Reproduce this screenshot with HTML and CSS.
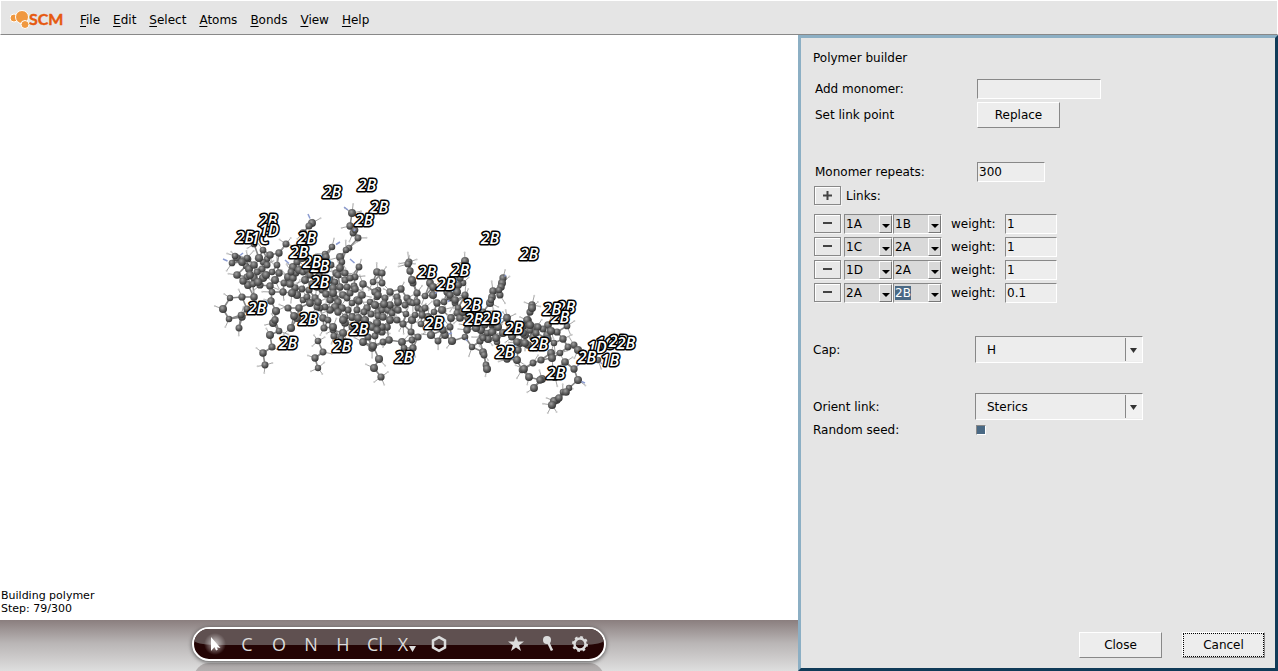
FILE: index.html
```html
<!DOCTYPE html>
<html lang="en">
<head>
    <meta charset="UTF-8">
    <meta name="viewport" content="width=device-width, initial-scale=1.0">
    <title>Polymer builder</title>
    <link rel="stylesheet" href="styles.css">
</head>
<body>
    <header class="menubar">
        <svg class="logo" width="56" height="22" viewBox="0 0 56 22" role="img" aria-label="SCM">
            <g fill="#f0983f" stroke="#fff" stroke-width="1">
                <circle cx="4" cy="9" r="4"/>
                <circle cx="12" cy="8" r="6.5"/>
                <circle cx="15" cy="15.500" r="4"/>
            </g>
            <text class="logo-text" x="19" y="16">SCM</text>
        </svg>
        <nav class="menu">
            <a href="#"><u>F</u>ile</a>
            <a href="#"><u>E</u>dit</a>
            <a href="#"><u>S</u>elect</a>
            <a href="#"><u>A</u>toms</a>
            <a href="#"><u>B</u>onds</a>
            <a href="#"><u>V</u>iew</a>
            <a href="#"><u>H</u>elp</a>
        </nav>
    </header>

    <main class="workspace">
        <section class="editor">
            <div class="viewport">
                <svg id="molecule" class="molecule" viewBox="0 35 798 585">
                    <defs>
                        <radialGradient id="carbon" cx="0.4" cy="0.35" r="0.65">
                            <stop offset="0" stop-color="#a2a2a2"/>
                            <stop offset="0.45" stop-color="#6b6b6b"/>
                            <stop offset="1" stop-color="#343434"/>
                        </radialGradient>
                    </defs>
                </svg>
                <p class="status">Building polymer<br>Step: 79/300</p>
            </div>
            <div class="dock">
                <div class="toolbar">
                    <div class="tools">
                        <button class="active" aria-label="Select">
                            <svg width="20" height="20" viewBox="0 0 20 20"><path d="M6 3v14l3.500-4 6 1z" fill="#fff"/><path d="M10 12l2 4" stroke="#fff" stroke-width="2"/></svg>
                        </button>
                        <button>C</button>
                        <button>O</button>
                        <button>N</button>
                        <button>H</button>
                        <button>Cl</button>
                        <button class="more">X<svg width="7" height="6" viewBox="0 0 7 6"><path d="M0 0h7L3.500 6z" fill="#dcdcdc"/></svg></button>
                        <button aria-label="Ring">
                            <svg width="18" height="18" viewBox="0 0 18 18"><path d="M9 2.200l6 3.400v6.800l-6 3.400-6-3.400V5.600z" fill="none" stroke="#dcdcdc" stroke-width="2.500"/></svg>
                        </button>
                    </div>
                    <div class="tools">
                        <button aria-label="Favorites">
                            <svg width="18" height="18" viewBox="0 0 18 18"><path d="M9 1l2 5.600h6l-4.800 3.600L14 16l-5-3.500L4 16l1.800-5.800L1 6.600h6z" fill="#dcdcdc"/></svg>
                        </button>
                        <button aria-label="Preoptimize">
                            <svg width="18" height="18" viewBox="0 0 18 18"><circle cx="8" cy="5" r="4" fill="#dcdcdc"/><path d="M9 7l4 8.500" stroke="#dcdcdc" stroke-width="2.500"/></svg>
                        </button>
                        <button aria-label="Settings">
                            <svg width="18" height="18" viewBox="0 0 18 18"><circle cx="9" cy="9" r="7" fill="none" stroke="#dcdcdc" stroke-width="2" stroke-dasharray="2.750 2.750"/><circle cx="9" cy="9" r="5.500" fill="none" stroke="#dcdcdc" stroke-width="2.400"/></svg>
                        </button>
                    </div>
                </div>
                <div class="reflection"></div>
            </div>
        </section>

        <form class="panel">
            <h1>Polymer builder</h1>

            <div class="monomer">
                <div class="row">
                    <label for="add">Add monomer:</label>
                    <input type="text" id="add" class="entry entry-wide">
                </div>
                <div class="row">
                    <label for="replace">Set link point</label>
                    <button type="button" id="replace" class="btn">Replace</button>
                </div>
            </div>

            <div class="repeats">
                <div class="row">
                    <label for="repeats">Monomer repeats:</label>
                    <input type="text" id="repeats" class="entry entry-medium" value="300">
                </div>
                <div class="row">
                    <button type="button" class="small" aria-label="Add link"><svg width="9" height="9" viewBox="0 0 9 9"><path d="M0 4.500h9M4.500 0v9" stroke="#444" stroke-width="2"/></svg></button>
                    <span class="links-title">Links:</span>
                </div>
            </div>

            <div class="links">
                <div class="link">
                    <button type="button" class="small" aria-label="Remove link"><svg width="9" height="9" viewBox="0 0 9 9"><path d="M0 4h9" stroke="#444" stroke-width="2"/></svg></button>
                    <span class="combo"><input type="text" value="1A" aria-label="From"><button type="button" aria-label="Choose"></button></span>
                    <span class="combo"><input type="text" value="1B" aria-label="To"><button type="button" aria-label="Choose"></button></span>
                    <label for="w1">weight:</label>
                    <input type="text" id="w1" class="entry entry-small" value="1">
                </div>
                <div class="link">
                    <button type="button" class="small" aria-label="Remove link"><svg width="9" height="9" viewBox="0 0 9 9"><path d="M0 4h9" stroke="#444" stroke-width="2"/></svg></button>
                    <span class="combo"><input type="text" value="1C" aria-label="From"><button type="button" aria-label="Choose"></button></span>
                    <span class="combo"><input type="text" value="2A" aria-label="To"><button type="button" aria-label="Choose"></button></span>
                    <label for="w2">weight:</label>
                    <input type="text" id="w2" class="entry entry-small" value="1">
                </div>
                <div class="link">
                    <button type="button" class="small" aria-label="Remove link"><svg width="9" height="9" viewBox="0 0 9 9"><path d="M0 4h9" stroke="#444" stroke-width="2"/></svg></button>
                    <span class="combo"><input type="text" value="1D" aria-label="From"><button type="button" aria-label="Choose"></button></span>
                    <span class="combo"><input type="text" value="2A" aria-label="To"><button type="button" aria-label="Choose"></button></span>
                    <label for="w3">weight:</label>
                    <input type="text" id="w3" class="entry entry-small" value="1">
                </div>
                <div class="link">
                    <button type="button" class="small" aria-label="Remove link"><svg width="9" height="9" viewBox="0 0 9 9"><path d="M0 4h9" stroke="#444" stroke-width="2"/></svg></button>
                    <span class="combo"><input type="text" value="2A" aria-label="From"><button type="button" aria-label="Choose"></button></span>
                    <span class="combo"><input type="text" id="lastLink" value="2B" aria-label="To"><button type="button" aria-label="Choose"></button></span>
                    <label for="w4">weight:</label>
                    <input type="text" id="w4" class="entry entry-small" value="0.1">
                </div>
            </div>

            <div class="options">
                <div class="row">
                    <label for="cap">Cap:</label>
                    <select id="cap"><option>H</option></select>
                </div>
                <div class="row">
                    <label for="orient">Orient link:</label>
                    <select id="orient"><option>Sterics</option></select>
                </div>
            </div>
            <div class="row seed">
                <label for="seed">Random seed:</label>
                <input type="checkbox" id="seed" checked>
            </div>

            <div class="actions">
                <button type="button" class="btn">Close</button>
                <button type="button" class="btn default">Cancel</button>
            </div>
        </form>
    </main>

    <script src="script.js"></script>
</body>
</html>
```
FILE: styles.css
```css
* {
    box-sizing: border-box;
}

body {
    margin: 0;
    height: 100vh;
    display: flex;
    flex-direction: column;
    font-family: "DejaVu Sans", sans-serif;
    font-size: 12px;
    color: #000;
    background: #fff;
}

button, input, select {
    font-family: inherit;
    font-size: 12px;
    color: #000;
    margin: 0;
    border-radius: 0;
}

/* Menu bar */
.menubar {
    display: flex;
    align-items: center;
    gap: 14px;
    height: 35px;
    padding: 5px 9px 0;
    background: #e5e5e5;
    border: 1px solid #fff;
    border-bottom-color: #888;
}

.logo-text {
    font-family: Lato, sans-serif;
    font-size: 16px;
    font-weight: bold;
    fill: #e6590f;
    stroke: #e6590f;
    stroke-width: 0.4;
}

.menu {
    display: flex;
    gap: 13px;
}

.menu a {
    color: #000;
    text-decoration: none;
}

.menu u {
    text-underline-offset: 2px;
}

/* Work area */
.workspace {
    flex: 1;
    display: flex;
    min-height: 0;
}

.editor {
    flex: 1;
    min-width: 0;
    display: flex;
    flex-direction: column;
}

.viewport {
    flex: 1;
    min-height: 0;
    position: relative;
}

.molecule {
    display: block;
    width: 100%;
    height: 100%;
}

.tag {
    font-family: "Open Sans", sans-serif;
    font-size: 16px;
    font-weight: 600;
    font-style: italic;
    text-anchor: middle;
    fill: #fff;
    stroke: #000;
    stroke-width: 3;
    stroke-linejoin: round;
    paint-order: stroke;
}

.status {
    position: absolute;
    left: 1px;
    bottom: 5px;
    margin: 0;
    font-size: 11px;
    line-height: 13px;
}

/* Tool bar */
.dock {
    height: 51px;
    padding-top: 7px;
    overflow: hidden;
    background: linear-gradient(#8a7e7e, #b9b5b5 45%, #dedede);
}

.toolbar {
    position: relative;
    display: flex;
    justify-content: space-between;
    align-items: center;
    width: 414px;
    height: 34px;
    margin: 0 auto;
    padding: 0 8px 0 5px;
    border: 2px solid #fff;
    border-radius: 17px;
    background: #240404;
    box-shadow: 0 1px 4px rgba(0, 0, 0, 0.6);
    overflow: hidden;
}

.toolbar::before {
    content: "";
    position: absolute;
    left: 0;
    right: 0;
    top: 0;
    height: 16px;
    border-radius: 0 0 20px 20px / 0 0 5px 5px;
    background: #5f5050;
}

.tools {
    display: flex;
    position: relative;
}

.tools button {
    display: flex;
    justify-content: center;
    align-items: center;
    width: 32px;
    height: 30px;
    padding: 0;
    border: none;
    background: none;
    color: #dcdcdc;
    font-family: "Open Sans", sans-serif;
    font-size: 18px;
}

.tools .active {
    background: radial-gradient(circle, rgba(255, 255, 255, 0.7), rgba(255, 255, 255, 0) 50%);
}

.more svg {
    margin: 10px 0 0 1px;
}

.reflection {
    width: 410px;
    height: 30px;
    margin: 2px auto 0;
    border-radius: 17px;
    background: linear-gradient(#aaa5a5, #d0cece);
}

/* Polymer builder */
.panel {
    flex: 0 0 480px;
    display: flex;
    flex-direction: column;
    padding: 10px 10px 10px 12px;
    background: #e5e5e5;
    border: 3px solid;
    border-color: #8cafc4 #103b58 #103b58 #8cafc4;
}

.panel h1 {
    margin: 0;
    font-size: 12px;
    font-weight: normal;
    line-height: 20px;
}

.row {
    display: flex;
    align-items: center;
}

.row label {
    width: 162px;
}

.monomer, .repeats {
    display: flex;
    flex-direction: column;
    gap: 4px;
    padding-left: 2px;
}

.monomer {
    gap: 3px;
    margin-top: 11px;
}

.repeats {
    margin-top: 34px;
}

.btn {
    width: 83px;
    height: 26px;
    padding: 0;
    background: #ededed;
    border: 1px solid;
    border-color: #fff #888 #888 #fff;
}

.btn.default {
    outline: 1px dotted #000;
    outline-offset: -2px;
}

.entry {
    height: 20px;
    padding: 0 1px;
    background: #ededed;
    border: 1px solid;
    border-color: #888 #fff #fff #888;
    outline: none;
}

.entry-wide {
    width: 124px;
}

.entry-medium {
    width: 68px;
}

.entry-small {
    width: 52px;
}

.small {
    display: flex;
    justify-content: center;
    align-items: center;
    width: 27px;
    height: 19px;
    padding: 0;
    background: #e8e8e8;
    border: 1px solid #888;
    box-shadow: inset 1px 1px #fff, 1px 1px #f4f4f4;
}

.repeats .small {
    margin-left: -1px;
}

.links-title {
    margin-left: 5px;
}

.links {
    display: flex;
    flex-direction: column;
    gap: 3px;
    margin: 9px 0 0 1px;
}

.link {
    display: flex;
    height: 20px;
}

.link label {
    width: 54px;
    margin-left: 9px;
    line-height: 20px;
}

.combo {
    display: flex;
    width: 49px;
    height: 20px;
    background: #d9d9d9;
    border: 1px solid;
    border-color: #888 #fff #fff #888;
}

.small + .combo {
    margin-left: 3px;
}

.combo input {
    flex: 1;
    width: 20px;
    padding: 0 1px;
    border: none;
    outline: none;
    background: none;
}

.combo input::selection {
    background: #4a6984;
    color: #fff;
}

.combo button {
    width: 13px;
    padding: 4px 0 0;
    background: #d9d9d9;
    border: 1px solid;
    border-color: #fff #777 #777 #fff;
}

.combo button::after {
    content: "";
    display: block;
    width: 0;
    margin: 0 auto;
    border: 4px solid transparent;
    border-top-color: #000;
    border-bottom: none;
}

.options {
    display: flex;
    flex-direction: column;
    gap: 30px;
    margin-top: 33px;
}

select {
    appearance: none;
    width: 168px;
    height: 27px;
    padding: 0 20px 0 11px;
    border: 1px solid;
    border-color: #888 #fff #fff #888;
    background: #ededed url("data:image/svg+xml,%3Csvg xmlns='http://www.w3.org/2000/svg' width='17' height='23'%3E%3Cpath d='M0 0h17v23H0z' fill='%23f1f1f1'/%3E%3Cpath d='M0 0h1v23H0z' fill='%23888'/%3E%3Cpath d='M5 10h7l-3.500 5z' fill='%23333'/%3E%3C/svg%3E") no-repeat right center;
}

.seed {
    height: 19px;
}

.seed input {
    appearance: none;
    width: 10px;
    height: 10px;
    margin-left: 1px;
    background: #4a6984;
    border: 1px solid;
    border-color: #888 #fff #fff #888;
}

.actions {
    display: flex;
    justify-content: flex-end;
    gap: 20px;
    margin-top: auto;
}
```
FILE: script.js
```js
const NS = 'http://www.w3.org/2000/svg';
const scene = document.getElementById('molecule');

// carbon positions, one fragment of the polymer per line
const fragments = [
    '230,298 223,309 229,319 242,317 247,309 242,297 254,297 241,315 239,328',
    '271,301 276,311 273,323 279,331 291,328 297,318 288,308 270,335 272,347 263,353 265,365 294,316 275,320',
    '323,318 324,328 318,341 323,352 315,358 318,368 333,330 334,336 343,333 345,323 341,339',
    '372,327 375,336 372,348 379,359 374,368 381,377 363,342 369,325 373,346 382,332 383,342 389,340',
    '402,342 412,340 413,348 404,348 403,324 411,332 421,324',
    '312,223 303,233 309,226 352,213 350,226 353,233 358,238 355,230 349,248 346,250 340,257 342,262 332,247 325,254 326,257',
    '359,267 355,277 354,286 286,244 279,253 263,250 267,259 254,244 237,258 232,263 237,275 248,259 235,256',
    '377,272 382,273 373,282 382,283 378,290 409,262 410,271 413,283 408,264 412,280',
    '465,261 463,283 460,278 458,285 430,283 433,287 433,295 425,296 417,293 447,292 450,298 457,292 465,296 455,303',
    '503,278 502,283 500,295 493,291 492,297 490,303 483,312 501,287 499,290 491,300 532,305 530,312 528,320 532,308',
    '418,337 431,335 438,341 445,335 452,341 465,337 472,347 483,352 484,355 486,365 487,369',
    '482,337 480,341 488,339 492,332 497,342 507,359 517,360 522,370 529,377 534,388 533,363 541,360 524,369',
    '551,353 552,358 560,353 565,362 542,379 555,377 540,380 574,369 578,380 569,388 563,392 566,392 557,400 554,401 552,405 559,398',
    '568,347 574,345 578,350 582,353 598,360 563,339 567,326 557,332 548,325 537,327 528,321 547,335 554,343 533,337 525,335',
    '520,343 518,350 528,345 507,317 492,325 512,336 543,329 551,331 548,339 530,330 523,326',
    '247,258 246,266 249,269 254,265 262,269 263,262 270,255 277,265 279,273 272,272 263,278 254,278 247,277 248,285 253,284',
    '260,285 270,286 272,292 283,292 284,283 288,277 293,278 296,273 293,267 299,270 297,262 303,272 307,270 302,258 305,280',
    '295,288 302,289 297,295 303,300 292,293 307,297 299,308 315,298 322,290 317,287 325,287 330,280 335,282 336,273 340,268',
    '338,275 333,288 340,287 343,295 335,298 330,300 338,302 347,298 350,293 355,289 345,280 363,284 357,300 359,301 352,303',
    '348,310 345,317 342,308 335,307 338,312 330,310 352,317 357,310 367,308 370,302 358,318 365,320 343,320 325,307 320,308 317,307',
    '375,292 377,297 378,295 380,307 375,305 378,312 382,310 378,316 383,317 388,310 392,313 395,308 390,305 385,298 390,292',
    '401,289 397,297 398,302 407,298 410,302 417,293 413,303 418,308 422,310 425,308 428,317 422,315 417,302 405,305 397,320',
    '387,327 382,327 377,323 372,327 377,330 403,324 412,320 434,312 432,325 333,327 328,320 357,325 365,330 368,337',
    '450,295 455,300 458,308 457,313 460,318 463,312 468,325 467,330 465,295 450,327 443,330',
    '481,330 487,333 483,338 492,332 496,338 493,323 498,327 507,318 512,337 513,330 522,327 527,320 523,333 517,342 525,343 530,325 538,327',
    '242,262 250,275 257,272 259,258 267,265 258,282 243,281 266,275 275,280 290,284 291,272 310,264 310,275 312,284 319,276',
    '326,270 331,265 326,294 318,302 309,290 310,303 347,287 350,278 345,273 333,293 362,295 364,312 371,314 352,327 384,304',
    '398,310 406,314 390,320 415,315 437,303 444,302 442,310 451,318 476,328 473,312 480,320 468,318 485,325 503,333 536,333'
];

// amine nitrogens: x, y of the carbon and of the tip
const nitrogens = [
    [312, 223, 308, 214], [352, 213, 344, 207], [332, 247, 340, 242], [359, 267, 350, 259],
    [232, 263, 223, 259], [237, 258, 243, 253], [353, 233, 355, 229], [503, 278, 506, 275],
    [578, 380, 585, 383], [574, 369, 580, 363], [445, 335, 452, 333], [598, 360, 602, 364],
    [293, 267, 285, 260], [433, 295, 437, 292], [450, 298, 448, 302], [465, 337, 467, 341]
];

const labels = [
    ['2B', 332, 192], ['2B', 367, 185], ['2B', 379, 207], ['2B', 364, 220],
    ['2B', 268, 220], ['2B', 245, 237], ['1C', 260, 238], ['1D', 269, 230],
    ['2B', 307, 238], ['2B', 320, 266], ['2B', 312, 262], ['2B', 299, 252],
    ['2B', 320, 282], ['2B', 257, 308], ['2B', 308, 319], ['2B', 288, 343],
    ['2B', 342, 346], ['2B', 359, 329], ['2B', 404, 357], ['2B', 434, 323],
    ['2B', 427, 272], ['2B', 446, 284], ['2B', 460, 270], ['2B', 490, 238],
    ['2B', 529, 254], ['2B', 472, 305], ['2B', 474, 319], ['2B', 491, 318],
    ['2B', 514, 328], ['2B', 505, 352], ['2B', 539, 344], ['2B', 566, 307],
    ['2B', 560, 317], ['2B', 552, 309], ['2B', 556, 373], ['1C', 605, 343],
    ['2B', 618, 341], ['2B', 626, 343], ['1D', 597, 347], ['2B', 587, 357],
    ['1B', 610, 360]
];

function add(name, attributes, parent) {
    const el = document.createElementNS(NS, name);
    for (const key in attributes) {
        el.setAttribute(key, attributes[key]);
    }
    parent.appendChild(el);
    return el;
}

function line(x1, y1, x2, y2, color, width) {
    add('line', { x1, y1, x2, y2, stroke: color, 'stroke-width': width }, scene);
}

// repeatable pseudo random value between 0 and 1
function noise(n) {
    const v = Math.sin(n * 12.9898) * 43758.5453;
    return v - Math.floor(v);
}

const atoms = fragments.join(' ').split(' ').map(p => {
    const [x, y] = p.split(',').map(Number);
    return { x, y, bonds: 0, dx: 0, dy: 0 };
});

function drawBonds() {
    atoms.forEach((a, i) => {
        const near = atoms.slice(i + 1)
            .map(b => ({ b, d: Math.hypot(a.x - b.x, a.y - b.y) }))
            .filter(n => n.d > 3 && n.d < 15)
            .sort((m, n) => m.d - n.d);
        near.forEach(({ b }) => {
            if (a.bonds < 3 && b.bonds < 3) {
                line(a.x, a.y, b.x, b.y, '#858585', 1.6);
                a.bonds++;
                b.bonds++;
                a.dx += b.x - a.x;
                a.dy += b.y - a.y;
                b.dx += a.x - b.x;
                b.dy += a.y - b.y;
            }
        });
    });
}

function drawHydrogens() {
    atoms.forEach((a, i) => {
        const count = a.bonds < 2 ? 3 : 1;
        const out = Math.atan2(-a.dy, -a.dx);
        for (let k = 0; k < count; k++) {
            const angle = out + (k - (count - 1) / 2) * 1.5 + (noise(i + k) - 0.5);
            const len = 7 + noise(i * 3 + k) * 3;
            const x = a.x + Math.cos(angle) * len;
            const y = a.y + Math.sin(angle) * len;
            line(a.x, a.y, x, y, '#9a9a9a', 0.9);
            add('circle', { cx: x, cy: y, r: 1, fill: '#cacaca' }, scene);
        }
    });
}

drawBonds();
drawHydrogens();
atoms.forEach((a, i) => {
    add('circle', { cx: a.x, cy: a.y, r: 3.2 + noise(i) * 0.9, fill: 'url(#carbon)' }, scene);
});
nitrogens.forEach(([x1, y1, x2, y2]) => {
    line((x1 + x2) / 2, (y1 + y2) / 2, x2, y2, '#8b9bd0', 1.5);
});
labels.forEach(([text, x, y]) => {
    add('text', { x, y: y + 6, class: 'tag' }, scene).textContent = text;
});

// the last link is the one being edited
const lastLink = document.getElementById('lastLink');
lastLink.focus();
lastLink.select();
```
